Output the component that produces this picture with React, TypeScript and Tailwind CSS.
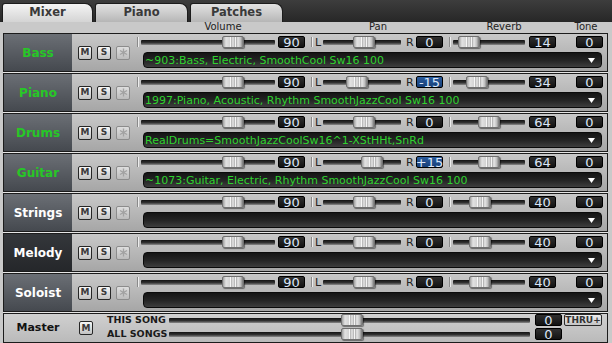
import React from "react";

type Track = {
  name: string;
  green: boolean;
  selected?: boolean;
  pan: string;
  panX: number;
  reverb: string;
  revX: number;
  patch: string;
};

const tracks: Track[] = [
  { name: "Bass", green: true, pan: "0", panX: 30, reverb: "14", revX: 5, patch: "~903:Bass, Electric, SmoothCool Sw16 100" },
  { name: "Piano", green: true, pan: "-15", panX: 23, reverb: "34", revX: 13, patch: "1997:Piano, Acoustic, Rhythm SmoothJazzCool Sw16 100" },
  { name: "Drums", green: true, pan: "0", panX: 30, reverb: "64", revX: 25, patch: "RealDrums=SmoothJazzCoolSw16^1-XStHHt,SnRd" },
  { name: "Guitar", green: true, pan: "+15", panX: 38, reverb: "64", revX: 25, patch: "~1073:Guitar, Electric, Rhythm SmoothJazzCool Sw16 100" },
  { name: "Strings", green: false, pan: "0", panX: 30, reverb: "40", revX: 16, patch: "" },
  { name: "Melody", green: false, selected: true, pan: "0", panX: 30, reverb: "40", revX: 16, patch: "" },
  { name: "Soloist", green: false, pan: "0", panX: 30, reverb: "40", revX: 16, patch: "" },
];

function Slider({ className, thumb }: { className: string; thumb: number }) {
  return (
    <div className={`relative h-[12px] shrink-0 ${className}`}>
      <div className="absolute inset-x-0 top-[4px] h-[5px] rounded-[1px] bg-[linear-gradient(#111,#333_55%,#8c8c8c)]" />
      <div
        className="absolute top-0 h-[12px] w-[22px] rounded-[2px] border border-[#707070] bg-[linear-gradient(to_right,#a0a0a0,#e2e2e2_15%,#d4d4d4_33%,#fbfbfb_38%,#a6a6a6_44%,#fbfbfb_50%,#a6a6a6_56%,#fbfbfb_62%,#b0b0b0_68%,#e8e8e8_74%,#c0c0c0_88%,#767676)] shadow-[1px_1px_1px_rgba(0,0,0,0.45)]"
        style={{ left: thumb }}
      />
    </div>
  );
}

function ValBox({ v, blue, className = "" }: { v: string; blue?: boolean; className?: string }) {
  return (
    <div
      className={`flex h-[12px] w-[27px] shrink-0 items-center justify-center rounded-[2px] border border-black text-[13px] leading-none text-[#dbe6f7] ${
        blue ? "bg-[linear-gradient(#2a5b9c,#173f78)]" : "bg-[linear-gradient(#303030,#121212)]"
      } ${className}`}
    >
      {v}
    </div>
  );
}

function Btn({ children }: { children: React.ReactNode }) {
  return (
    <div className="flex h-[14px] w-[14px] items-center justify-center rounded-[2px] border border-[#262626] bg-[linear-gradient(#f7f7f7,#c2c2c2)] text-[9px] font-bold leading-none text-[#3a3a3a]">
      {children}
    </div>
  );
}

function FreezeBtn() {
  return (
    <div className="flex h-[14px] w-[14px] items-center justify-center rounded-[2px] border border-[#8c8c8c] bg-[linear-gradient(#dedede,#bcbcbc)]">
      <svg width="9" height="9" viewBox="0 0 10 10" stroke="#a2a2a2" strokeWidth="1.5">
        <path d="M5 0.5V9.5M1.1 2.75L8.9 7.25M1.1 7.25L8.9 2.75" />
      </svg>
    </div>
  );
}

function Sep() {
  return <div className="h-[10px] w-[2px] shrink-0 border-l border-[#8a8a8a] bg-[#ececec]" />;
}

function Tab({ label, active, className }: { label: string; active?: boolean; className: string }) {
  return (
    <div
      className={`flex h-[19px] items-center justify-center rounded-tl-[3px] rounded-tr-[8px] border border-b-0 border-[#1c1c1c] text-[11.5px] font-bold text-[#3a3a3a] ${className} ${
        active ? "bg-[linear-gradient(#f4f4f4,#d4d4d4)]" : "bg-[linear-gradient(#e2e2e2,#b6b6b6)]"
      }`}
    >
      {label}
    </div>
  );
}

function Row({ t }: { t: Track }) {
  return (
    <div className="flex h-[39px] border border-[#1c1c1c] bg-[linear-gradient(#c8c8c8,#a6a6a6)] shadow-[0_1px_0_#e6e6e6]">
      <div
        className={`flex w-[68px] shrink-0 items-center justify-center text-[12px] font-bold ${
          t.selected ? "bg-[linear-gradient(#34373b,#25272a)]" : "bg-[linear-gradient(#6b6f75,#45494f)]"
        } ${t.green ? "text-[#27c727]" : "text-white"}`}
      >
        {t.name}
      </div>
      <div className="ml-[6px] flex items-center gap-[5px]">
        <Btn>M</Btn>
        <Btn>S</Btn>
        <FreezeBtn />
      </div>
      <div className="ml-[7px] flex flex-col pt-[2px]">
        <div className="flex h-[12px] items-center">
          <Sep />
          <Slider className="ml-[2px] w-[134px]" thumb={81} />
          <ValBox v="90" className="ml-[3px]" />
          <div className="ml-[6px]">
            <Sep />
          </div>
          <span className="ml-[2px] w-[6px] text-[11px] leading-none text-[#222]">L</span>
          <Slider className="ml-[2px] w-[78px]" thumb={t.panX} />
          <span className="ml-[5px] w-[7px] text-[11px] leading-none text-[#222]">R</span>
          <ValBox v={t.pan} blue={t.pan !== "0"} className="ml-[3px]" />
          <div className="ml-[6px]">
            <Sep />
          </div>
          <Slider className="ml-[2px] w-[72px]" thumb={t.revX} />
          <ValBox v={t.reverb} className="ml-[4px]" />
          <ValBox v="0" className="ml-[20px]" />
        </div>
        <div className="ml-[6px] mt-[4px] flex h-[16px] w-[459px] items-center justify-between rounded-[4px] border border-[#0a0a0a] bg-[linear-gradient(#141414,#232323_50%,#3e3e3e)] pl-[1px] pr-[6px]">
          <span className="whitespace-nowrap text-[11px] leading-none text-[#2fd22f]">{t.patch}</span>
          <svg width="7" height="5" viewBox="0 0 7 5">
            <path d="M0 0H7L3.5 5Z" fill="#fff" />
          </svg>
        </div>
      </div>
    </div>
  );
}

function MasterLine({ label, thru }: { label: string; thru?: boolean }) {
  return (
    <div className="flex h-[12px] items-center">
      <span className="w-[62px] shrink-0 text-[9.5px] font-bold leading-none text-[#1a1a1a]">{label}</span>
      <Slider className="w-[361px]" thumb={172} />
      <ValBox v="0" className="ml-[5px]" />
      {thru && (
        <div className="ml-[2px] flex h-[12px] w-[38px] items-center justify-center rounded-[2px] border border-[#2a2a2a] bg-[linear-gradient(#ececec,#c4c4c4)] text-[9px] font-bold leading-none text-[#333]">
          THRU+
        </div>
      )}
    </div>
  );
}

export default function App() {
  return (
    <div className="h-[343px] w-[612px] overflow-hidden bg-[#c9c9c9] font-['DejaVu_Sans','Liberation_Sans',sans-serif]">
      <div className="flex h-[22px] items-end gap-[2px] bg-[linear-gradient(#3d3d3d,#272727)] pl-[2px]">
        <Tab label="Mixer" active className="w-[91px]" />
        <Tab label="Piano" className="w-[93px]" />
        <Tab label="Patches" className="w-[93px]" />
      </div>
      <div className="flex h-[11px] items-end pb-[1px] text-[10px] leading-none text-[#222]">
        <span className="ml-[183px] w-[80px] text-center">Volume</span>
        <span className="ml-[75px] w-[80px] text-center">Pan</span>
        <span className="ml-[46px] w-[80px] text-center">Reverb</span>
        <span className="ml-[22px] w-[40px] text-center">Tone</span>
      </div>
      <div className="flex flex-col gap-[1px] pl-[3px] pr-[4px]">
        {tracks.map((t) => (
          <Row key={t.name} t={t} />
        ))}
        <div className="flex h-[30px] border border-[#1c1c1c] bg-[linear-gradient(#d0d0d0,#bababa)]">
          <div className="flex w-[68px] shrink-0 items-center justify-center text-[11px] font-bold text-[#111]">Master</div>
          <div className="ml-[7px] flex items-center">
            <Btn>M</Btn>
          </div>
          <div className="ml-[14px] flex flex-col gap-[2px]">
            <MasterLine label="THIS SONG" thru />
            <MasterLine label="ALL SONGS" />
          </div>
        </div>
      </div>
    </div>
  );
}
